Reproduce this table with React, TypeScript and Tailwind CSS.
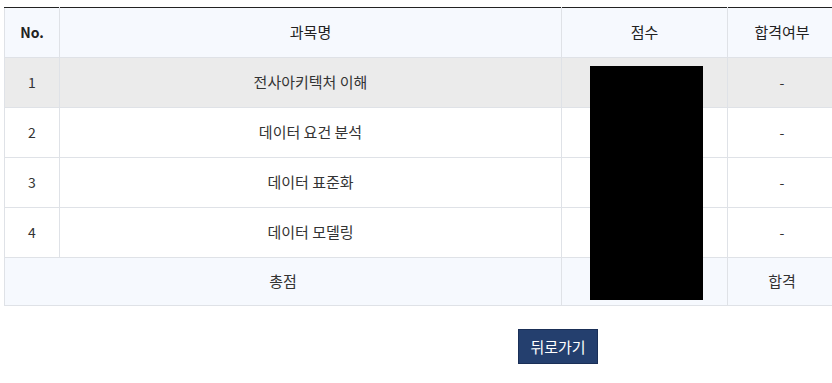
import React from 'react'

const rows = [
  { no: '1', name: '전사아키텍처 이해', pass: '-', hl: true },
  { no: '2', name: '데이터 요건 분석', pass: '-' },
  { no: '3', name: '데이터 표준화', pass: '-' },
  { no: '4', name: '데이터 모델링', pass: '-' },
]

export default function App() {
  const cell = 'border border-[#dfe2e7] text-center align-middle'
  return (
    <div
      className="relative w-[832px] h-[383px] bg-white text-[#333] text-[14px] overflow-hidden"
      style={{ fontFamily: '"Noto Sans CJK KR", "Noto Sans", sans-serif' }}
    >
      <div className="pt-[7px] pl-[4px]">
        <table className="border-collapse table-fixed w-[832px] border-t border-t-[#222]">
          <colgroup>
            <col className="w-[55px]" />
            <col className="w-[502px]" />
            <col className="w-[166px]" />
            <col className="w-[109px]" />
          </colgroup>
          <thead>
            <tr className="h-[50px] bg-[#f6f9fe] text-[#222] text-[15px]">
              <th className={`${cell} font-semibold text-[14px] border-t-[#222]`}>No.</th>
              <th className={`${cell} font-normal border-t-[#222]`}>과목명</th>
              <th className={`${cell} font-normal border-t-[#222]`}>점수</th>
              <th className={`${cell} font-normal border-t-[#222]`}>합격여부</th>
            </tr>
          </thead>
          <tbody>
            {rows.map(r => (
              <tr key={r.no} className={`h-[50px] ${r.hl ? 'bg-[#ebebeb]' : 'bg-white'}`}>
                <td className={cell}>{r.no}</td>
                <td className={`${cell} text-[15px]`}>{r.name}</td>
                <td className={cell}></td>
                <td className={cell}>{r.pass}</td>
              </tr>
            ))}
            <tr className="h-[48px] bg-[#f6f9fe] text-[15px]">
              <td className={cell} colSpan={2}>총점</td>
              <td className={cell}></td>
              <td className={cell}>합격</td>
            </tr>
          </tbody>
        </table>
      </div>

      <div className="mt-[23px] pl-[518px]">
        <button className="w-[80px] h-[35px] bg-[#243f6e] border border-[#1a2f57] text-white text-[15px] leading-none">
          뒤로가기
        </button>
      </div>

      {/* redaction */}
      <div className="absolute left-[590px] top-[66px] w-[113px] h-[234px] bg-black" />
    </div>
  )
}
